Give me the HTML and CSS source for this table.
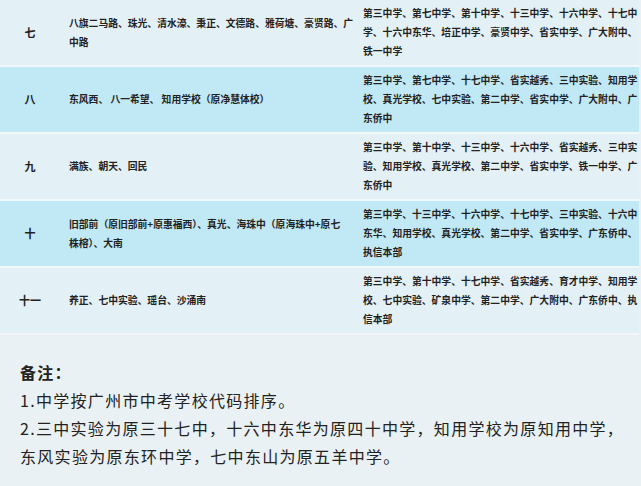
FILE: index.html
```html
<!DOCTYPE html>
<html lang="zh">
<head>
<meta charset="utf-8">
<link rel="stylesheet" href="styles.css">
</head>
<body>
<div class="table">
  <div class="row light">
    <div class="c1">七</div>
    <div class="c2">八旗二马路、珠光、清水濠、秉正、文德路、雅荷塘、豪贤路、广中路</div>
    <div class="c3">第三中学、第七中学、第十中学、十三中学、十六中学、十七中学、十六中东华、培正中学、豪贤中学、省实中学、广大附中、铁一中学</div>
  </div>
  <div class="row blue">
    <div class="c1">八</div>
    <div class="c2">东风西、 八一希望、 知用学校（原净慧体校）</div>
    <div class="c3">第三中学、第七中学、十七中学、省实越秀、三中实验、知用学校、真光学校、七中实验、第二中学、省实中学、广大附中、广东侨中</div>
  </div>
  <div class="row light">
    <div class="c1">九</div>
    <div class="c2">满族、朝天、回民</div>
    <div class="c3">第三中学、第十中学、十三中学、十六中学、省实越秀、三中实验、知用学校、真光学校、第二中学、省实中学、铁一中学、广东侨中</div>
  </div>
  <div class="row blue">
    <div class="c1">十</div>
    <div class="c2">旧部前（原旧部前+原惠福西）、真光、海珠中（原海珠中+原七<br>株榕）、大南</div>
    <div class="c3">第三中学、十三中学、十六中学、十七中学、三中实验、十六中东华、知用学校、真光学校、第二中学、省实中学、广东侨中、执信本部</div>
  </div>
  <div class="row light">
    <div class="c1">十一</div>
    <div class="c2">养正、七中实验、瑶台、沙涌南</div>
    <div class="c3">第三中学、第十中学、十七中学、省实越秀、育才中学、知用学校、七中实验、矿泉中学、第二中学、广大附中、广东侨中、执信本部</div>
  </div>
</div>
<div class="notes">
  <p class="title">备注：</p>
  <p>1.中学按广州市中考学校代码排序。</p>
  <p>2.三中实验为原三十七中，十六中东华为原四十中学，知用学校为原知用中学，东风实验为原东环中学，七中东山为原五羊中学。</p>
</div>
</body>
</html>
```
FILE: styles.css
```css
html, body {
  margin: 0;
  padding: 0;
}
body {
  background: #e9f1f4;
  font-family: "Noto Sans CJK SC", "Noto Sans", sans-serif;
  color: #222;
  width: 641px;
}
.table {
  width: 639px;
}
.row {
  display: grid;
  grid-template-columns: 60px 296px 1fr;
  align-items: center;
  height: 65px;
  border-bottom: 2px solid #f2f8fa;
  font-size: 9.8px;
  font-weight: 700;
  line-height: 19px;
}
.row.light { background: #e3f0f5; }
.row.blue { background: #c0e8f5; }
.c1 {
  text-align: center;
  font-size: 11px;
}
.c2 {
  padding: 0 1.5px 0 9px;
}
.c3 {
  padding: 0 0 0 7px;
}
.notes {
  padding: 23px 12px 0 20px;
  font-size: 16px;
  letter-spacing: 1.3px;
  line-height: 28px;
  color: #222;
}
.notes p {
  margin: 0;
}
.notes .title {
  font-weight: 700;
}
```
